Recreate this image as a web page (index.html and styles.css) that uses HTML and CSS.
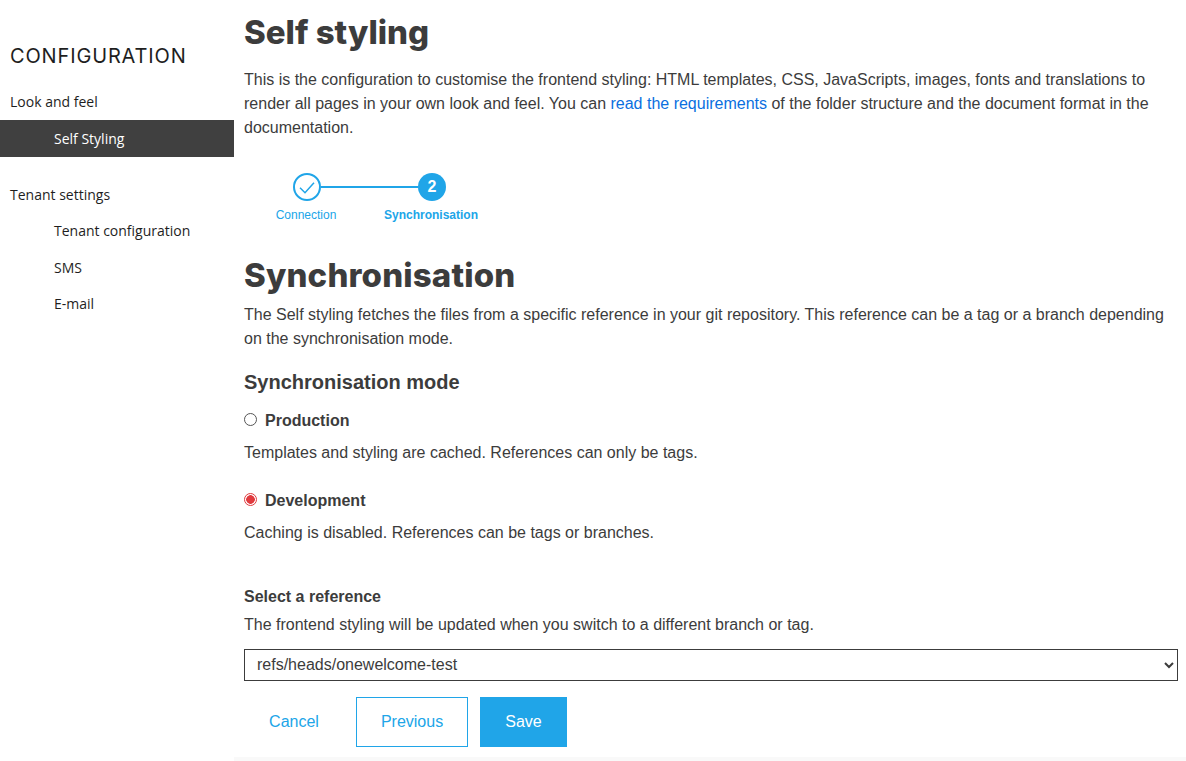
FILE: index.html
```html
<!DOCTYPE html>
<html lang="en">
<head>
    <meta charset="UTF-8">
    <meta name="viewport" content="width=device-width, initial-scale=1.0">
    <title>Self styling</title>
    <link rel="stylesheet" href="styles.css">
</head>
<body>
    <div class="layout">
        <nav class="sidebar">
            <h3 class="sidebar-title">CONFIGURATION</h3>
            <div class="nav-group">Look and feel</div>
            <a class="nav-item active">Self Styling</a>
            <div class="nav-group second">Tenant settings</div>
            <a class="nav-item">Tenant configuration</a>
            <a class="nav-item">SMS</a>
            <a class="nav-item">E-mail</a>
        </nav>
        <main class="content">
            <h1>Self styling</h1>
            <p class="intro">This is the configuration to customise the frontend styling: HTML templates, CSS, JavaScripts, images, fonts and translations to render all pages in your own look and feel. You can <a class="link">read the requirements</a> of the folder structure and the document format in the documentation.</p>

            <div class="stepper">
                <div class="step">
                    <div class="step-circle done">
                        <svg width="16" height="14" viewBox="0 0 16 14"><path d="M1 7.7 L6 12.7 L15 2.7" fill="none" stroke="#20a5e8" stroke-width="1.5"/></svg>
                    </div>
                    <span class="step-label">Connection</span>
                </div>
                <div class="step-line"></div>
                <div class="step">
                    <div class="step-circle current">2</div>
                    <span class="step-label bold">Synchronisation</span>
                </div>
            </div>

            <h1 class="section-title">Synchronisation</h1>
            <p class="section-text">The Self styling fetches the files from a specific reference in your git repository. This reference can be a tag or a branch depending on the synchronisation mode.</p>

            <h2>Synchronisation mode</h2>
            <label class="radio-row"><input type="radio" name="mode"> Production</label>
            <p class="radio-text">Templates and styling are cached. References can only be tags.</p>
            <label class="radio-row dev"><input type="radio" name="mode" checked> Development</label>
            <p class="radio-text">Caching is disabled. References can be tags or branches.</p>

            <div class="field-title">Select a reference</div>
            <p class="field-text">The frontend styling will be updated when you switch to a different branch or tag.</p>
            <select class="ref-select">
                <option>refs/heads/onewelcome-test</option>
            </select>

            <div class="btn-container">
                <button class="btn cancel">Cancel</button>
                <button class="btn previous">Previous</button>
                <button class="btn save">Save</button>
            </div>
        </main>
    </div>
    <div class="footer-band"></div>
</body>
</html>
```

FILE: styles.css
```css
* {
    box-sizing: border-box;
}
body {
    margin: 0;
    height: 761px;
    overflow: hidden;
    background: #fff;
    color: #3c3c3c;
    font-family: 'Liberation Sans', Arial, sans-serif;
    font-size: 16px;
    line-height: 24px;
}
p {
    margin: 0;
}
.layout {
    display: flex;
    height: 757px;
}
.footer-band {
    height: 4px;
    margin-left: 234px;
    background: #f9f9f9;
}

/* Sidebar */
.sidebar {
    width: 234px;
    flex-shrink: 0;
    padding-top: 42px;
    font-family: 'Open Sans', sans-serif;
    font-size: 14px;
    color: #1e1e1e;
}
.sidebar-title {
    margin: 0 0 17px 10px;
    font-family: 'Inter', sans-serif;
    font-size: 20px;
    line-height: 28px;
    font-weight: 400;
    letter-spacing: 0.85px;
}
.nav-group {
    height: 36px;
    padding: 0 10px;
    line-height: 36px;
    margin-top: -3px;
}
.nav-group.second {
    margin-top: 20px;
    margin-bottom: -0.5px;
}
.nav-item {
    display: block;
    height: 36.5px;
    line-height: 37px;
    padding-left: 54px;
}
.nav-item.active {
    line-height: 38px;
    background: #404040;
    color: #fff;
}

/* Main content */
.content {
    flex: 1;
    padding: 0 8px 0 10px;
}
h1 {
    margin: 0;
    font-family: 'Inter', sans-serif;
    font-weight: 800;
    font-size: 33px;
    line-height: 40px;
    padding-top: 12px;
}
.intro {
    margin-top: 16px;
}
.link {
    color: #0a6fe0;
}

/* Stepper */
.stepper {
    display: flex;
    align-items: flex-start;
    margin: 33px 0 0 0;
    padding-left: 49px;
    height: 59px;
}
.step {
    position: relative;
    width: 28px;
    height: 28px;
}
.step-circle {
    width: 28px;
    height: 28px;
    border-radius: 50%;
    display: flex;
    justify-content: center;
    align-items: center;
    font-size: 16px;
    font-weight: bold;
}
.step-circle.done {
    border: 2px solid #20a5e8;
}
.step-circle.current {
    background: #20a5e8;
    color: #fff;
}
.step-line {
    width: 97px;
    height: 2px;
    margin-top: 13px;
    background: #20a5e8;
}
.step-label {
    position: absolute;
    top: 32px;
    left: calc(50% - 1px);
    transform: translateX(-50%);
    white-space: nowrap;
    font-size: 12px;
    line-height: 20px;
    color: #20a5e8;
}
.step-label.bold {
    font-weight: bold;
}

.section-title {
    padding-top: 0;
    margin-top: 23px;
    letter-spacing: 0.15px;
}
.section-text {
    margin-top: 8px;
}
h2 {
    margin: 17px 0 0;
    font-size: 20px;
    line-height: 28px;
    font-weight: bold;
}

/* Radios */
.radio-row {
    display: flex;
    align-items: center;
    gap: 8px;
    margin-top: 13px;
    height: 24px;
    font-weight: bold;
}
.radio-row input {
    appearance: none;
    width: 13px;
    height: 13px;
    margin: -3px 0 0;
    border: 1px solid #555;
    border-radius: 50%;
    background: #fff;
}
.radio-row input:checked {
    border-color: #e03a3e;
    background: radial-gradient(circle, #e03a3e 0, #e03a3e 4px, #fff 4.6px);
}
.radio-row.dev {
    margin-top: 24px;
}
.radio-text {
    margin-top: 8px;
}

/* Reference select */
.field-title {
    margin-top: 40px;
    font-weight: bold;
}
.field-text {
    margin-top: 4px;
}
.ref-select {
    display: block;
    width: 100%;
    height: 32px;
    margin-top: 12px;
    padding: 0 8px 2px;
    border: 1px solid #3c3c3c;
    border-radius: 0;
    background: #fff;
    color: #3c3c3c;
    font-family: 'Liberation Sans', Arial, sans-serif;
    font-size: 16px;
}

/* Buttons */
.btn-container {
    display: flex;
    margin-top: 16px;
}
.btn {
    height: 50px;
    border: 1px solid #20a5e8;
    background: #fff;
    color: #20a5e8;
    font-family: 'Liberation Sans', Arial, sans-serif;
    font-size: 16px;
    cursor: pointer;
}
.btn.cancel {
    width: 100px;
    border: none;
    margin-right: 12px;
}
.btn.previous {
    width: 112px;
    margin-right: 12px;
}
.btn.save {
    width: 87px;
    background: #20a5e8;
    color: #fff;
}
```
